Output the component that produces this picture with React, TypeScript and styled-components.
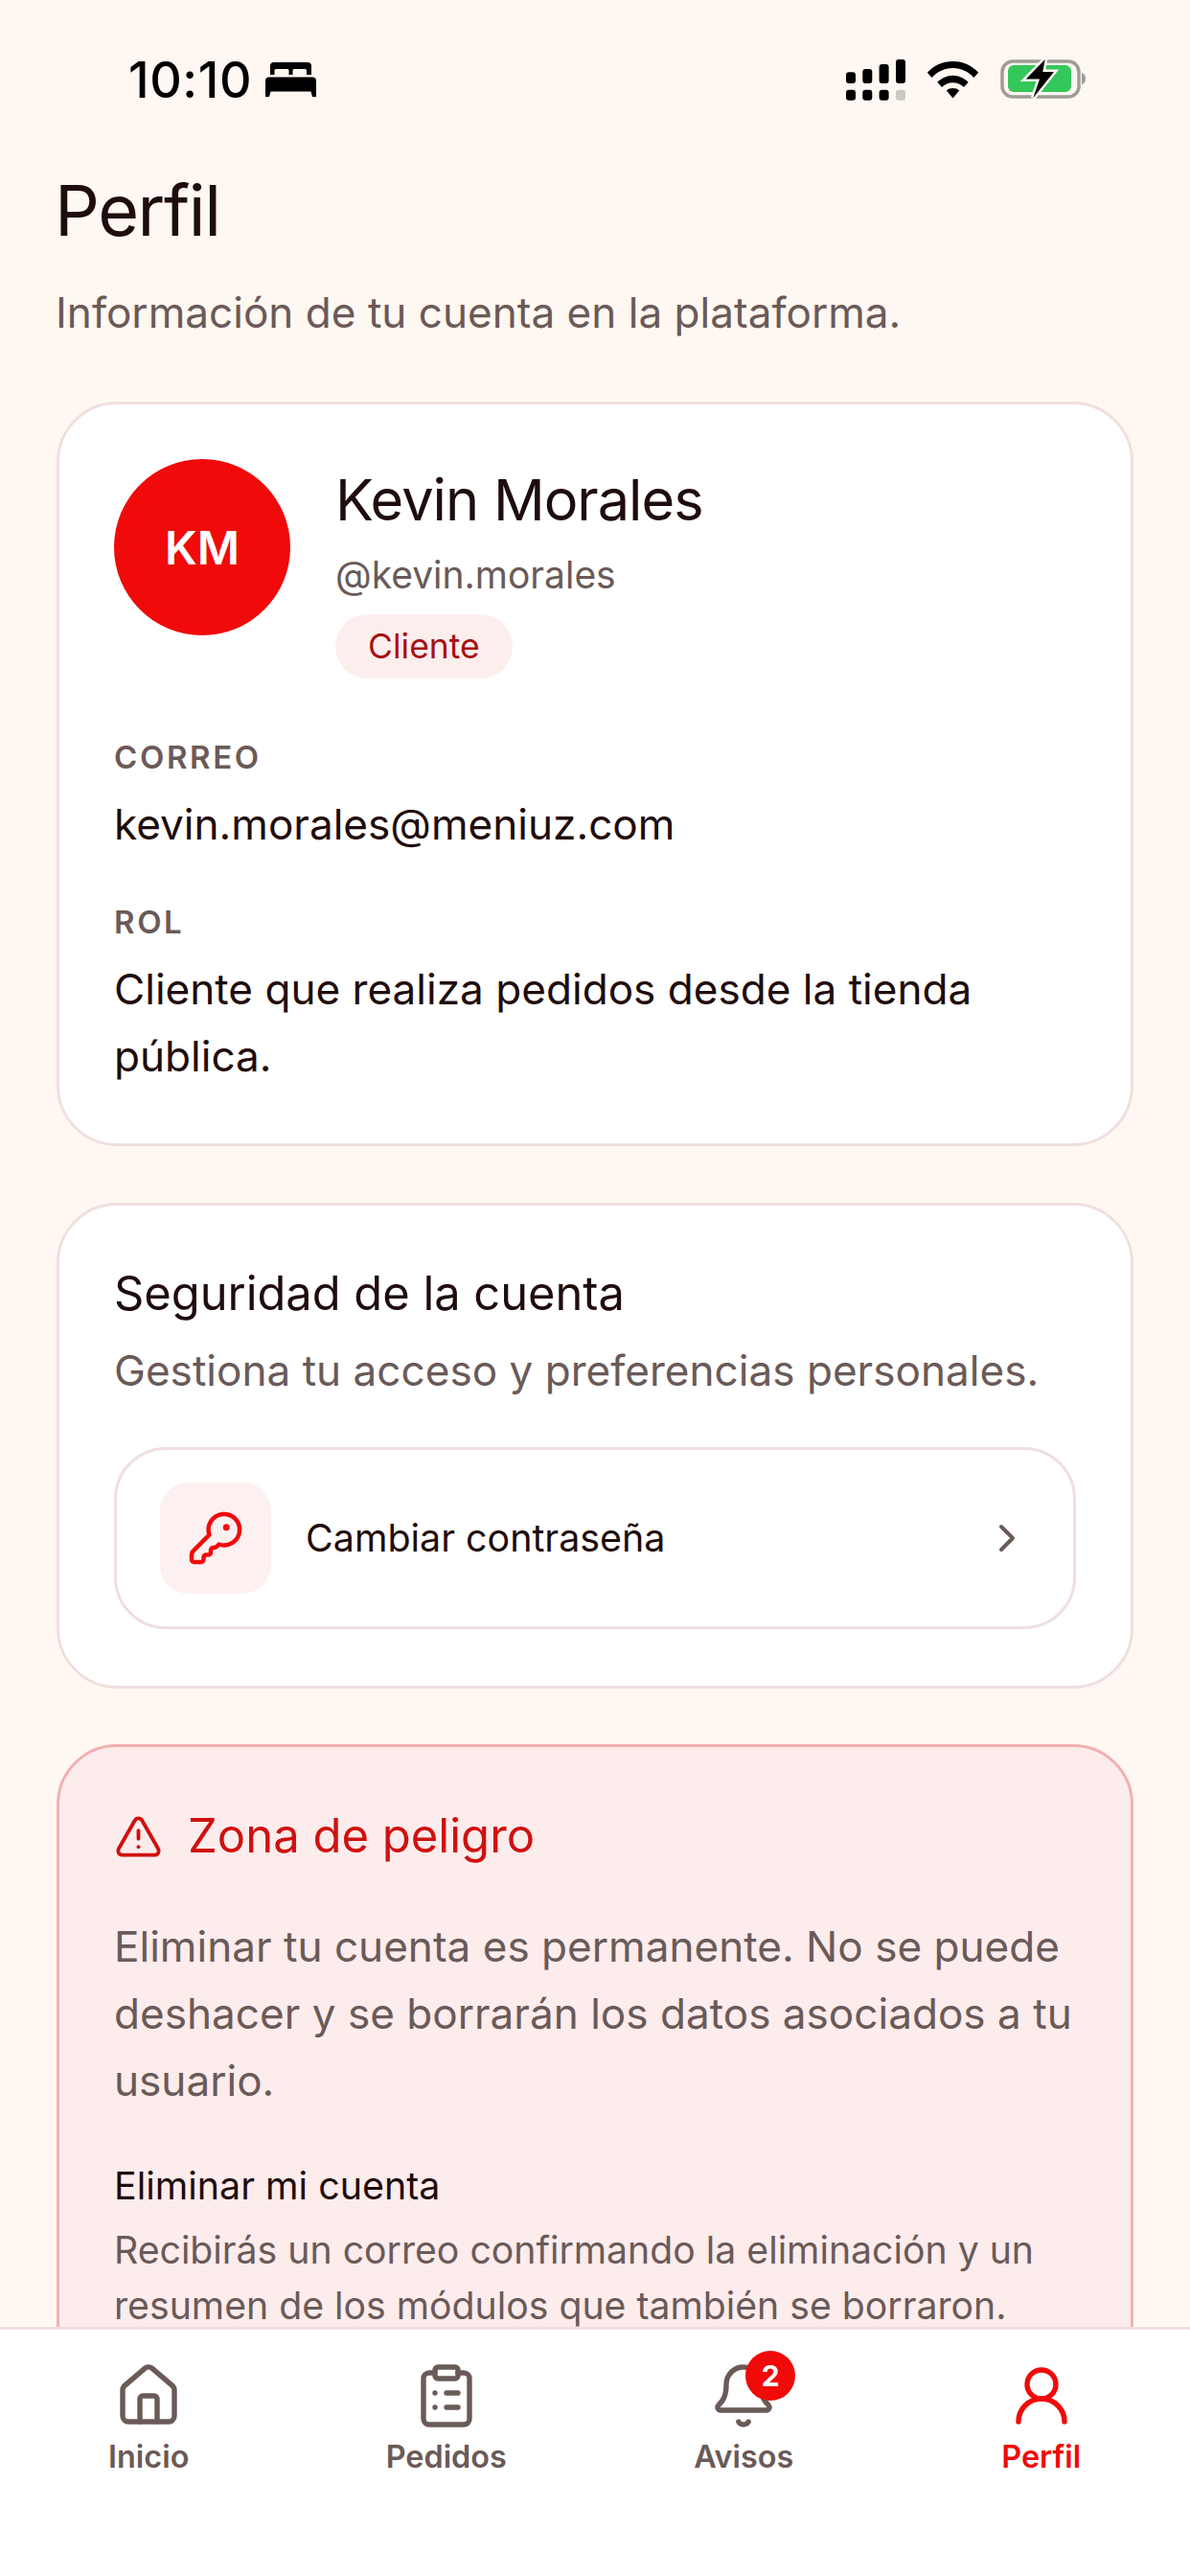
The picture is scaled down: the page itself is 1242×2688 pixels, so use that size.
import React from "react";
import styled, { createGlobalStyle } from "styled-components";
import {
  Bell,
  ChevronRight,
  ClipboardList,
  House,
  KeyRound,
  TriangleAlert,
  UserRound
} from "lucide-react";

const GlobalStyle = createGlobalStyle`
  html, body {
    margin: 0;
    padding: 0;
    background: #fff8f2;
    font-family: Inter, "Noto Sans", sans-serif;
  }
  * {
    box-sizing: border-box;
  }
`;

const Screen = styled.div`
  width: 1242px;
  height: 2688px;
  display: flex;
  flex-direction: column;
  overflow: hidden;
  background: #fff8f2;
  color: #1f0c0c;
`;

const StatusBar = styled.div`
  flex: none;
  height: 135px;
  padding: 48px 109px 0 134px;
  display: flex;
  align-items: flex-start;
  justify-content: space-between;
`;

const Clock = styled.div`
  display: flex;
  align-items: center;
  gap: 14px;
  height: 70px;
  font-size: 52px;
  font-weight: 500;
  letter-spacing: 0.6px;
  color: #000;
`;

const StatusIcons = styled.div`
  display: flex;
  align-items: center;
  gap: 22px;
  height: 70px;
`;

const Content = styled.main`
  flex: 1;
  min-height: 0;
  overflow: hidden;
  padding: 37px 59px 0;
  display: flex;
  flex-direction: column;
`;

const PageTitle = styled.h1`
  margin: 0 0 0 -2px;
  font-size: 73.5px;
  line-height: 96px;
  font-weight: 400;
  letter-spacing: -1.4px;
`;

const PageSubtitle = styled.p`
  margin: 28px 0 0 -1px;
  font-size: 44.1px;
  line-height: 60px;
  color: #6a5a58;
`;

const Card = styled.section<{ $danger?: boolean }>`
  flex: none;
  margin-top: ${({ $danger }) => ($danger ? "58px" : "59px")};
  padding: 57px 57px 59px;
  border-radius: 63px;
  border: 3px solid ${({ $danger }) => ($danger ? "#f2b0b0" : "#f0dfdf")};
  background: ${({ $danger }) => ($danger ? "#fdecec" : "#ffffff")};
`;

const FirstCard = styled(Card)`
  margin-top: 63px;
  padding-bottom: 56px;
`;

const ProfileHead = styled.div`
  display: flex;
  gap: 47px;
`;

const Avatar = styled.div`
  flex: none;
  width: 184px;
  height: 184px;
  border-radius: 50%;
  background: #f00a0a;
  color: #fff;
  display: flex;
  align-items: center;
  justify-content: center;
  font-size: 48px;
  font-weight: 600;
`;

const ProfileInfo = styled.div`
  display: flex;
  flex-direction: column;
  align-items: flex-start;
`;

const Name = styled.div`
  font-size: 59.5px;
  line-height: 84px;
  font-weight: 400;
  letter-spacing: -1px;
`;

const Handle = styled.div`
  margin-top: 10px;
  font-size: 39px;
  line-height: 54px;
  color: #6a5a58;
`;

const RoleChip = styled.span`
  margin-top: 14px;
  height: 67px;
  padding: 0 34px;
  border-radius: 34px;
  background: #fdeeee;
  color: #a80f0f;
  display: flex;
  align-items: center;
  font-size: 35.5px;
`;

const FieldLabel = styled.div<{ $first?: boolean }>`
  margin-top: ${({ $first }) => ($first ? "58px" : "43px")};
  font-size: 33px;
  line-height: 48px;
  font-weight: 600;
  letter-spacing: 2.6px;
  color: #6a5a58;
`;

const FieldValue = styled.div`
  margin-top: 11px;
  font-size: 44.1px;
  line-height: 70px;
  color: #1f0c0c;
`;

const CardTitle = styled.h2`
  margin: -1px 0 0;
  font-size: 48.8px;
  line-height: 72px;
  font-weight: 400;
`;

const CardText = styled.p`
  margin: 10px 0 0;
  font-size: 44.1px;
  line-height: 69px;
  color: #6a5a58;
`;

const ActionRow = styled.div`
  margin-top: 45px;
  height: 190px;
  padding: 0 45px;
  border: 3px solid #f0dfdf;
  border-radius: 54px;
  background: #fff;
  display: flex;
  align-items: center;
  gap: 36px;
`;

const ActionTile = styled.div`
  flex: none;
  width: 116px;
  height: 116px;
  border-radius: 30px;
  background: #fdf0f0;
  color: #f00a0a;
  display: flex;
  align-items: center;
  justify-content: center;
`;

const ActionLabel = styled.div`
  flex: 1;
  font-size: 39.4px;
`;

const ActionChevron = styled(ChevronRight)`
  flex: none;
  color: #6a5a58;
`;

const DangerHead = styled.div`
  display: flex;
  align-items: center;
  gap: 26px;
  color: #d01010;
`;

const DangerTitle = styled.h2`
  margin: 0;
  font-size: 49px;
  line-height: 72px;
  font-weight: 400;
`;

const DangerText = styled.p`
  margin: 44px 0 0;
  font-size: 44.1px;
  line-height: 70px;
  color: #6a5a58;
`;

const DangerActionTitle = styled.div`
  margin-top: 45px;
  font-size: 39.4px;
  line-height: 60px;
`;

const DangerActionText = styled.p`
  margin: 8px 0 0;
  font-size: 39.2px;
  line-height: 58px;
  color: #6a5a58;
`;

const BottomNav = styled.nav`
  flex: none;
  height: 260px;
  background: #fff;
  border-top: 3px solid #f0dfdf;
  padding-top: 33px;
  display: grid;
  grid-template-columns: repeat(4, 1fr);
`;

const NavItem = styled.div<{ $active?: boolean }>`
  display: flex;
  flex-direction: column;
  align-items: center;
  gap: 6px;
  color: ${({ $active }) => ($active ? "#f00a0a" : "#6a5a58")};
  font-size: 32.4px;
  line-height: 44px;
  font-weight: 600;
`;

const NavIconWrap = styled.div`
  position: relative;
  width: 72px;
  height: 72px;
`;

const NavBadge = styled.span`
  position: absolute;
  top: -11px;
  right: -18px;
  width: 52px;
  height: 52px;
  border-radius: 50%;
  background: #f00a0a;
  color: #fff;
  font-size: 30px;
  font-weight: 700;
  display: flex;
  align-items: center;
  justify-content: center;
`;

const BedGlyph = () => (
  <svg width="53" height="36" viewBox="0 0 53 36" fill="#000">
    <path d="M9 0h35a4 4 0 0 1 4 4v9h-5V8.500a1.500 1.500 0 0 0-1.500-1.500H30a1.500 1.500 0 0 0-1.500 1.500V13h-4V8.500A1.500 1.500 0 0 0 23 7H11a1.500 1.500 0 0 0-1.500 1.500V13H5V4a4 4 0 0 1 4-4z" />
    <path d="M4 15.500h45a4 4 0 0 1 4 4V36h-4l-1.500-5.500h-42L4 36H0V19.500a4 4 0 0 1 4-4z" />
  </svg>
);

const SignalGlyph = () => (
  <svg width="62" height="43" viewBox="0 0 62 43" fill="#000">
    <rect x="0" y="13.300" width="10" height="11.700" rx="3" />
    <rect x="17.300" y="10" width="10" height="15" rx="3" />
    <rect x="34.600" y="5" width="10" height="20" rx="3" />
    <rect x="52" y="0" width="10" height="25" rx="3" />
    <rect x="0" y="31.700" width="10" height="11" rx="3" />
    <rect x="17.300" y="31.700" width="10" height="11" rx="3" />
    <rect x="34.600" y="31.700" width="10" height="11" rx="3" />
    <rect x="52" y="31.700" width="10" height="11" rx="3" fill="#cbc8c2" />
  </svg>
);

const WifiGlyph = () => (
  <svg width="55" height="40" viewBox="0 0 56 42" fill="#000">
    <path d="M0 13.5C7 5.500 17 1 28 1s21 4.500 28 12.500l-5 5.500C45 12.500 37 8.500 28 8.500S11 12.500 5 19z" />
    <path d="M11 24c4.500-4.500 10.500-7.500 17-7.500S40.500 19.500 45 24l-5 5.500c-3-3-7.200-5-12-5s-9 2-12 5z" />
    <path d="M21 33c2-1.600 4.300-2.500 7-2.500s5 .9 7 2.500l-7 8.500z" />
  </svg>
);

const BatteryGlyph = () => (
  <svg width="89" height="42" viewBox="0 0 89 42">
    <rect x="2" y="2" width="80" height="37" rx="11" fill="none" stroke="#a09c97" strokeWidth="3.500" />
    <rect x="8" y="6" width="66" height="28" rx="6" fill="#34c759" />
    <path d="M85 14c2.500.5 4 3 4 6s-1.500 5.500-4 6z" fill="#a09c97" />
    <path
      d="M46.700 0 26.700 20.400H41L34.300 40.300 56 13H44.300z"
      fill="#000"
      stroke="#fff8f2"
      strokeWidth="5"
      paintOrder="stroke"
    />
  </svg>
);

const App = () => (
  <Screen>
    <GlobalStyle />
    <StatusBar>
      <Clock>
        10:10
        <BedGlyph />
      </Clock>
      <StatusIcons>
        <SignalGlyph />
        <WifiGlyph />
        <BatteryGlyph />
      </StatusIcons>
    </StatusBar>
    <Content>
      <PageTitle>Perfil</PageTitle>
      <PageSubtitle>Información de tu cuenta en la plataforma.</PageSubtitle>

      <FirstCard>
        <ProfileHead>
          <Avatar>KM</Avatar>
          <ProfileInfo>
            <Name>Kevin Morales</Name>
            <Handle>@kevin.morales</Handle>
            <RoleChip>Cliente</RoleChip>
          </ProfileInfo>
        </ProfileHead>
        <FieldLabel $first>CORREO</FieldLabel>
        <FieldValue>kevin.morales@meniuz.com</FieldValue>
        <FieldLabel>ROL</FieldLabel>
        <FieldValue>Cliente que realiza pedidos desde la tienda pública.</FieldValue>
      </FirstCard>

      <Card>
        <CardTitle>Seguridad de la cuenta</CardTitle>
        <CardText>Gestiona tu acceso y preferencias personales.</CardText>
        <ActionRow>
          <ActionTile>
            <KeyRound size={60} strokeWidth={1.8} />
          </ActionTile>
          <ActionLabel>Cambiar contraseña</ActionLabel>
          <ActionChevron size={48} strokeWidth={2} />
        </ActionRow>
      </Card>

      <Card $danger>
        <DangerHead>
          <TriangleAlert size={51} strokeWidth={1.8} />
          <DangerTitle>Zona de peligro</DangerTitle>
        </DangerHead>
        <DangerText>
          Eliminar tu cuenta es permanente. No se puede deshacer y se borrarán los datos asociados a tu usuario.
        </DangerText>
        <DangerActionTitle>Eliminar mi cuenta</DangerActionTitle>
        <DangerActionText>
          Recibirás un correo confirmando la eliminación y un resumen de los módulos que también se borraron.
        </DangerActionText>
      </Card>
    </Content>
    <BottomNav>
      <NavItem>
        <NavIconWrap>
          <House size={72} strokeWidth={1.8} />
        </NavIconWrap>
        Inicio
      </NavItem>
      <NavItem>
        <NavIconWrap>
          <ClipboardList size={72} strokeWidth={1.8} />
        </NavIconWrap>
        Pedidos
      </NavItem>
      <NavItem>
        <NavIconWrap>
          <Bell size={72} strokeWidth={1.8} />
          <NavBadge>2</NavBadge>
        </NavIconWrap>
        Avisos
      </NavItem>
      <NavItem $active>
        <NavIconWrap>
          <UserRound size={72} strokeWidth={1.8} />
        </NavIconWrap>
        Perfil
      </NavItem>
    </BottomNav>
  </Screen>
);

export default App;
